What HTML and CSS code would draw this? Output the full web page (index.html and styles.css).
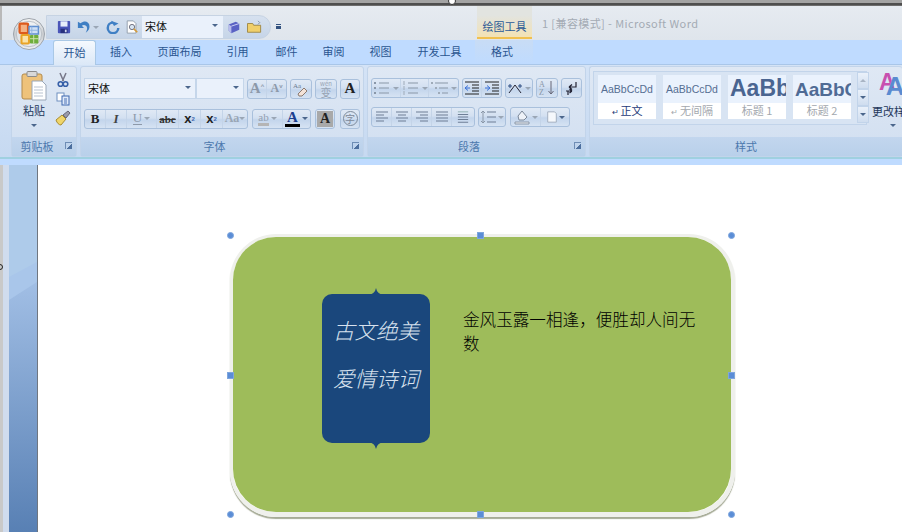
FILE: index.html
```html
<!DOCTYPE html>
<html lang="en">
<head>
    <meta charset="UTF-8">
    <meta name="viewport" content="width=device-width, initial-scale=1.0">
    <title>Microsoft Word</title>
    <link rel="stylesheet" href="styles.css">
</head>
<body>
<div class="window">
    <div class="top-edge"></div>

    <!-- Office button sits over the title bar and tabs -->
    <svg class="office-btn" viewBox="0 0 34 34">
        <defs>
            <linearGradient id="ring" x1="0" y1="0" x2="0" y2="1"><stop offset="0" stop-color="#f4f4f4"/><stop offset="0.5" stop-color="#c9ccd0"/><stop offset="1" stop-color="#eef0f2"/></linearGradient>
            <linearGradient id="face" x1="0" y1="0" x2="0" y2="1"><stop offset="0" stop-color="#f2f4f6"/><stop offset="0.5" stop-color="#dfe4e8"/><stop offset="1" stop-color="#e8eaf0"/></linearGradient>
        </defs>
        <circle cx="17" cy="17" r="16.500" fill="url(#ring)" stroke="#9aa0a8"/>
        <circle cx="17" cy="17" r="13.500" fill="url(#face)" stroke="#b9bec4"/>
        <rect x="7" y="6" width="9" height="10" rx="1" fill="#f4b183" stroke="#dd5a1c" stroke-width="2.400"/>
        <rect x="17" y="9" width="10" height="8" fill="#cfe0f6" stroke="#5f8fd0" stroke-width="1.600"/>
        <path d="M20 9v8M17 13h10" stroke="#8fb2e0"/>
        <rect x="9" y="18" width="8" height="9" rx="1" fill="#fbe3a8" stroke="#e9a427" stroke-width="2.200"/>
        <rect x="18" y="18" width="9" height="9" rx="1" fill="#6fae3c"/>
        <path d="M22 18v9M18 22h9" stroke="#d2e8b0"/>
    </svg>
    <span class="speck speck-top"></span>
    <span class="speck speck-left"></span>

    <!-- Title bar with quick access toolbar -->
    <div class="titlebar">
        <div class="qat">
            <svg class="ico-q" viewBox="0 0 16 16"><rect x="1" y="1" width="14" height="14" rx="1" fill="#4a55b8"/><rect x="4" y="1.500" width="8" height="6" fill="#e8eefb"/><rect x="4" y="10" width="8" height="5" fill="#27307e"/><rect x="9" y="11" width="2" height="3" fill="#cfd6f0"/></svg>
            <svg class="ico-q q-undo" viewBox="0 0 16 16"><path d="M1 2v7h7L5.500 6.500C8 5 11 6 11.500 9c.2 1.500-.3 3-1.500 5.500 3.500-2 5-5.500 4-9C13 1.500 8.500 0 4 3.800Z" fill="#3f7fc4"/></svg>
            <span class="caret grey"></span>
            <svg class="ico-q q-redo" viewBox="0 0 16 16"><path d="M8 3A6 6 0 1 0 14 9" fill="none" stroke="#3f7fc4" stroke-width="2.800"/><path d="M7 0v7h6Z" fill="#3f7fc4" transform="rotate(-30 8 3)"/></svg>
            <svg class="ico-q q-prev" viewBox="0 0 16 16"><path d="M2.500 1h7l3 3v11h-10Z" fill="#fdfdfd" stroke="#8d99a8"/><circle cx="8" cy="8" r="3" fill="#d8e6f2" stroke="#667"/><path d="M10 10l4 4" stroke="#d49a3a" stroke-width="2"/></svg>
            <div class="qat-combo"><span>宋体</span><span class="caret"></span></div>
            <svg class="ico-q q-box" viewBox="0 0 16 16"><path d="M2 5l8-3 4 2v7l-9 4-3-3Z" fill="#5a62c4"/><path d="M2 5l3 2v8l-3-3Z" fill="#b8bcec"/><path d="M5 7l9-3" stroke="#d8dcf8"/></svg>
            <svg class="ico-q q-folder" viewBox="0 0 18 16"><path d="M1 4h6l1 2h8v8H1Z" fill="#f0cf6a" stroke="#9a8440"/><path d="M13 1l2 2-2 2" fill="none" stroke="#7a8ba0"/></svg>
        </div>
        <span class="qat-more"></span>
        <div class="tool-tab">绘图工具</div>
        <div class="doc-title">1 [兼容模式] - Microsoft Word</div>
    </div>

    <!-- Tabs -->
    <div class="tabs">
        <div class="tab active">开始</div>
        <div class="tab w-ins">插入</div>
        <div class="tab w-layout">页面布局</div>
        <div class="tab w-ref">引用</div>
        <div class="tab w-mail">邮件</div>
        <div class="tab w-rev">审阅</div>
        <div class="tab w-view">视图</div>
        <div class="tab w-dev">开发工具</div>
        <div class="tab tab-format">格式</div>
    </div>

    <!-- Ribbon -->
    <div class="ribbon">
        <section class="group g-clip">
            <div class="group-body clip-body">
                <div class="paste">
                    <svg width="26" height="30" viewBox="0 0 26 30"><rect x="1" y="3" width="20" height="25" rx="2" fill="#eec27a" stroke="#b28a4c"/><rect x="6" y="0.500" width="10" height="5" rx="1" fill="#d8d8d8" stroke="#8b8b8b"/><path d="M11 10h10l4 4v15H11Z" fill="#fff" stroke="#9aa7b8"/><path d="M13 16h9M13 19h9M13 22h9M13 25h9" stroke="#b9c3d0"/></svg>
                    <span class="paste-label">粘贴</span>
                    <span class="caret small"></span>
                </div>
                <div class="clip-tools">
                    <svg class="ico16" viewBox="0 0 16 16"><path d="M5 1l3.500 8M11 1L7.500 9" stroke="#778" stroke-width="1.500"/><circle cx="5.500" cy="12" r="2.300" fill="none" stroke="#3760a8" stroke-width="1.600"/><circle cx="10.500" cy="12" r="2.300" fill="none" stroke="#3760a8" stroke-width="1.600"/></svg>
                    <svg class="ico16" viewBox="0 0 16 16"><rect x="2" y="2" width="7" height="8" fill="#fff" stroke="#6f8fc0"/><rect x="7" y="5" width="7" height="9" fill="#dfeafa" stroke="#3f68b0"/><path d="M9 8h3M9 10h3M9 12h3" stroke="#4a70b5"/></svg>
                    <svg class="ico16" viewBox="0 0 16 16"><path d="M1 10l6-5 4 4-5 6c-2 0-4-2-5-5Z" fill="#f0d56a" stroke="#a88c30"/><path d="M8 5l5-4 2 2-4 5Z" fill="#9a9aa8" stroke="#667"/></svg>
                </div>
            </div>
            <div class="group-label label-clip">剪贴板<span class="launcher"></span></div>
        </section>

        <section class="group g-font">
            <div class="group-body rows">
                <div class="row">
                    <div class="combo w-font"><span>宋体</span><span class="caret"></span></div>
                    <div class="combo w-size"><span class="caret"></span></div>
                    <div class="btns"><span class="btn w19 glyph-grey big">A<sup>^</sup></span><span class="btn w19 glyph-grey">A<sup>v</sup></span></div>
                    <div class="btns"><span class="btn w20"><svg class="ico16" viewBox="0 0 16 16"><text x="0" y="7" font-size="7" fill="#6a7a90">Aa</text><path d="M5 13l6-6 3 3-5 5H6Z" fill="#f4e3d8" stroke="#8b7a70"/></svg></span></div>
                    <div class="btns"><span class="btn w20 wen"><small>wén</small>变</span></div>
                    <div class="btns"><span class="btn w18 boxed-a">A</span></div>
                </div>
                <div class="row row-tight">
                    <div class="btns">
                        <span class="btn w21 bold">B</span>
                        <span class="btn w21 ital">I</span>
                        <span class="btn w30 under"><span class="u-mark">U</span><span class="caret grey"></span></span>
                        <span class="btn w22 strike">abc</span>
                        <span class="btn w22 script">x<sub>2</sub></span>
                        <span class="btn w22 script">x<sup>2</sup></span>
                        <span class="btn w24 case">Aa<span class="caret grey"></span></span>
                    </div>
                    <div class="btns">
                        <span class="btn w30 hl"><span class="hl-text">ab</span><span class="caret grey"></span></span>
                        <span class="btn w27 colour"><span class="colour-a">A</span><span class="caret"></span></span>
                    </div>
                    <div class="btns"><span class="btn w18 shade">A</span></div>
                    <div class="btns push-1"><span class="btn w18 round-btn"><span class="ring">字</span></span></div>
                </div>
            </div>
            <div class="group-label label-font">字体<span class="launcher"></span></div>
        </section>

        <section class="group g-para">
            <div class="group-body rows">
                <div class="row row-para">
                    <div class="btns">
                        <span class="btn w29"><svg class="ico18" viewBox="0 0 18 14"><path d="M6 2h10M6 7h10M6 12h10" stroke="#8a97a8" stroke-width="1.200"/><path d="M1 2h2M1 7h2M1 12h2" stroke="#8a97a8" stroke-width="2"/></svg><span class="caret grey"></span></span>
                        <span class="btn w28"><svg class="ico18" viewBox="0 0 18 14"><path d="M6 2h10M6 7h10M6 12h10" stroke="#8a97a8" stroke-width="1.200"/><path d="M2 0v4M2 5v4M2 10v4" stroke="#9fabb9"/></svg><span class="caret grey"></span></span>
                        <span class="btn w29"><svg class="ico18" viewBox="0 0 18 14"><path d="M4 2h13M8 7h9M11 12h6" stroke="#8a97a8" stroke-width="1.200"/><path d="M0 2h2M4 7h2M7 12h2" stroke="#9fabb9" stroke-width="2"/></svg><span class="caret grey"></span></span>
                    </div>
                    <div class="btns">
                        <span class="btn w19"><svg class="ico16" viewBox="0 0 16 14"><path d="M1 1h14M8 4h7M8 7h7M8 10h7M1 13h14" stroke="#222"/><path d="M6 7H1M1 7l3-2.500M1 7l3 2.500" stroke="#3a70d8" fill="none"/></svg></span>
                        <span class="btn w19"><svg class="ico16" viewBox="0 0 16 14"><path d="M1 1h14M8 4h7M8 7h7M8 10h7M1 13h14" stroke="#222"/><path d="M1 7h5M6 7L3 4.500M6 7L3 9.500" stroke="#3a70d8" fill="none"/></svg></span>
                    </div>
                    <div class="btns"><span class="btn w26"><svg class="ico16" viewBox="0 0 16 14"><path d="M2 12L8 4l6 8" fill="none" stroke="#223"/><path d="M1 5h4M3 3v4M11 5h4M13 3v4" stroke="#2a4a80"/></svg><span class="caret grey"></span></span></div>
                    <div class="btns"><span class="btn w20"><svg class="ico16" viewBox="0 0 16 16"><text x="0" y="7" font-size="8" fill="#8a97a8">A</text><text x="0" y="15" font-size="8" fill="#8a97a8">Z</text><path d="M12 1v13M9.500 11l2.500 3 2.500-3" fill="none" stroke="#667"/></svg></span></div>
                    <div class="btns"><span class="btn w19"><svg class="ico16" viewBox="0 0 16 16"><path d="M12 2v5H5M5 7l3-2.500M5 7l3 2.500M2 11h6M8 11l-2.500-2M8 11l-2.500 2M4 11v4" fill="none" stroke="#223" stroke-width="1.200"/></svg></span></div>
                </div>
                <div class="row row-para">
                    <div class="btns">
                        <span class="btn w20"><svg class="ico14" viewBox="0 0 14 12"><path d="M1 1h12M1 4h8M1 7h12M1 10h8" stroke="#6f7f96" stroke-width="1.200"/></svg></span>
                        <span class="btn w20"><svg class="ico14" viewBox="0 0 14 12"><path d="M1 1h12M3 4h8M1 7h12M3 10h8" stroke="#6f7f96" stroke-width="1.200"/></svg></span>
                        <span class="btn w20"><svg class="ico14" viewBox="0 0 14 12"><path d="M1 1h12M5 4h8M1 7h12M5 10h8" stroke="#6f7f96" stroke-width="1.200"/></svg></span>
                        <span class="btn w20"><svg class="ico14" viewBox="0 0 14 12"><path d="M1 1h12M1 4h12M1 7h12M1 10h12" stroke="#6f7f96" stroke-width="1.200"/></svg></span>
                        <span class="btn w22"><svg class="ico14" viewBox="0 0 14 14"><path d="M1 4h12M1 7h12M1 10h12M1 13h12" stroke="#6f7f96" stroke-width="1.200"/><path d="M1 1h12" stroke="#8aa"/></svg></span>
                    </div>
                    <div class="btns"><span class="btn w26"><svg class="ico16" viewBox="0 0 16 14"><path d="M7 2h9M7 7h9M7 12h9" stroke="#6f7f96" stroke-width="1.200"/><path d="M3 1v12M1 3l2-2 2 2M1 11l2 2 2-2" fill="none" stroke="#8a97a8"/></svg><span class="caret grey"></span></span></div>
                    <div class="btns push-1">
                        <span class="btn w30"><svg class="ico16" viewBox="0 0 16 16"><path d="M4 7l4-5 5 6-3 3H5Z" fill="#eef2f8" stroke="#7a8798"/><path d="M1 13h14v2H1Z" fill="#eef1f5" stroke="#8a97a8"/></svg><span class="caret grey"></span></span>
                        <span class="btn w28"><svg class="ico14" viewBox="0 0 14 14"><path d="M2 1h8l2 2v10H2Z" fill="#f5f8fc" stroke="#9aa7b8"/></svg><span class="caret"></span></span>
                    </div>
                </div>
            </div>
            <div class="group-label label-font">段落<span class="launcher"></span></div>
        </section>

        <section class="group g-styles">
            <div class="group-body styles-body">
                <div class="gallery">
                    <div class="style-item"><div class="sample s-plain">AaBbCcDd</div><div class="style-name name-on"><i class="para-mark">↵</i>正文</div></div>
                    <div class="style-item"><div class="sample s-plain">AaBbCcDd</div><div class="style-name"><i class="para-mark">↵</i>无间隔</div></div>
                    <div class="style-item"><div class="sample s-h1">AaBb</div><div class="style-name">标题 1</div></div>
                    <div class="style-item"><div class="sample s-h2">AaBbC</div><div class="style-name">标题 2</div></div>
                    <div class="gallery-scroll">
                        <span class="scroll-btn"><i class="up"></i></span>
                        <span class="scroll-btn"><i class="down"></i></span>
                        <span class="scroll-btn last"><i class="down"></i></span>
                    </div>
                </div>
                <div class="change-style">
                    <div class="change-icon"><span class="a-pink">A</span><span class="a-blue">A</span></div>
                    <span class="change-label">更改样式</span>
                    <span class="caret small"></span>
                </div>
            </div>
            <div class="group-label">样式</div>
        </section>
    </div>

    <!-- Document area -->
    <div class="workspace">
        <div class="margin-strip">
            <svg class="strip-art" viewBox="0 0 28 367" preserveAspectRatio="none">
                <defs><linearGradient id="stripFade" x1="0" y1="0" x2="0" y2="1"><stop offset="0" stop-color="#a3c0e6"/><stop offset="1" stop-color="#5880b4"/></linearGradient></defs>
                <rect y="110" width="28" height="257" fill="url(#stripFade)"/>
                <polygon points="0,0 28,0 28,117 0,135" fill="#a9c6ea"/>
                <polygon points="0,0 28,0 28,97 0,112" fill="#aecbea"/>
            </svg>
        </div>
        <div class="page">
            <div class="frame">
                <div class="frame-fill"></div>
                <div class="plaque">
                    <svg class="spike spike-top" viewBox="0 0 16 7"><path d="M0 7Q7 6 8 0Q9 6 16 7Z"/></svg>
                    <p>古文绝美</p>
                    <p>爱情诗词</p>
                    <svg class="spike spike-bottom" viewBox="0 0 16 7"><path d="M0 0Q7 1 8 7Q9 1 16 0Z"/></svg>
                </div>
                <div class="poem">金风玉露一相逢，便胜却人间无数</div>
                <span class="handle dot h-tl"></span>
                <span class="handle sq h-tc"></span>
                <span class="handle dot h-tr"></span>
                <span class="handle sq h-ml"></span>
                <span class="handle sq h-mr"></span>
                <span class="handle dot h-bl"></span>
                <span class="handle sq h-bc"></span>
                <span class="handle dot h-br"></span>
            </div>
        </div>
    </div>
</div>
</body>
</html>
```

FILE: styles.css
```css
* {
    box-sizing: border-box;
}

body {
    margin: 0;
    width: 902px;
    height: 532px;
    overflow: hidden;
    background-color: #bfdbff;
    font-family: "Noto Sans CJK SC", "Liberation Sans", sans-serif;
}

.window {
    position: relative;
    width: 902px;
    height: 532px;
    display: flex;
    flex-direction: column;
    overflow: hidden;
}

.top-edge {
    height: 6px;
    flex: none;
    background: linear-gradient(#a3a3a3 0, #a3a3a3 3px, #4e4e4e 3px, #4e4e4e 5px, #8a8a8a 6px);
}

.office-btn {
    position: absolute;
    left: 13px;
    top: 18px;
    width: 32px;
    height: 32px;
    z-index: 2;
}

.speck {
    position: absolute;
    border-radius: 50%;
}

.speck-top {
    left: 448px;
    top: -3px;
    width: 8px;
    height: 8px;
    background-color: #fff;
    border: 1px solid #333;
}

.speck-left {
    left: -3px;
    top: 264px;
    width: 6px;
    height: 6px;
    border: 1px solid #222;
    z-index: 1;
}

/* title bar */
.titlebar {
    height: 34px;
    flex: none;
    display: flex;
    align-items: flex-start;
    padding: 9px 0 0 44px;
    border-left: 2px solid #b9b9b9;
    background: linear-gradient(#e6ebf1, #dfe5ec);
}

.qat {
    width: 225px;
    height: 24px;
    display: flex;
    align-items: center;
    padding-left: 10px;
    border: 1px solid #c6d3e3;
    border-radius: 0 13px 13px 0;
    background: linear-gradient(#d6e1ef, #c6d5e8);
}

.ico-q {
    width: 14px;
    height: 14px;
    flex: none;
}

.q-undo { margin-left: 6px; }
.q-redo { margin-left: 7px; }
.q-prev { margin-left: 5px; }
.q-box { margin-left: 4px; }
.q-folder { margin-left: 5px; width: 17px; }

.qat-combo {
    width: 81px;
    height: 22px;
    margin-left: 3px;
    padding: 0 5px 3px 3px;
    display: flex;
    align-items: center;
    justify-content: space-between;
    font-size: 11px;
    color: #111;
    background-color: #eaf1fb;
}

.qat-more {
    width: 5px;
    height: 5px;
    margin: 9px 0 0 5px;
    border-top: 1px solid #33527f;
    border-bottom: 3px solid #33527f;
}

.tool-tab {
    width: 55px;
    height: 33px;
    margin: -9px 0 0 196px;
    padding-top: 13px;
    text-align: center;
    font-size: 11px;
    line-height: 15px;
    color: #2b5a96;
    background: linear-gradient(#e2e4e0 30%, #f3e2b4);
    border-bottom: 2px solid #f0c050;
}

.doc-title {
    margin: 0 0 0 10px;
    font-size: 11px;
    line-height: 16px;
    color: #a4abb4;
    letter-spacing: 0.400px;
}

/* tabs */
.tabs {
    height: 24px;
    flex: none;
    display: flex;
    padding-left: 53px;
    background-color: #bfdbff;
}

.tab {
    height: 24px;
    flex: none;
    padding-top: 3px;
    text-align: center;
    font-size: 11px;
    line-height: 16px;
    color: #2a5590;
}

.tab.active {
    width: 43px;
    height: 25px;
    border: 1px solid #a9c8e6;
    border-bottom: none;
    border-radius: 3px 3px 0 0;
    background: linear-gradient(#f5f9fe, #dbe8f7);
    position: relative;
    z-index: 1;
}

.w-ins { width: 50px; }
.w-layout { width: 67px; }
.w-ref { width: 49px; }
.w-mail { width: 49px; }
.w-rev { width: 45px; }
.w-view { width: 49px; }
.w-dev { width: 69px; }

.tab-format {
    width: 58px;
    padding-right: 4px;
    margin-left: 1px;
    background: linear-gradient(#c8dcf5, #bfdbff);
}

/* ribbon */
.ribbon {
    height: 95px;
    flex: none;
    display: flex;
    gap: 3px;
    padding: 1px 0 0 11px;
    background: linear-gradient(#d4e3f6, #c6d9f1);
    border-top: 1px solid #a9c6e8;
    border-bottom: 2px solid #9fd0e0;
}

.group {
    height: 91px;
    flex: none;
    display: flex;
    flex-direction: column;
    border: 1px solid #c2d4ea;
    border-radius: 3px;
    background: linear-gradient(#dfe8f4, #d1dff1);
}

.g-clip { width: 66px; }
.g-font { width: 284px; }
.g-para { width: 219px; }
.g-styles { width: 313px; border-right: none; }

.group-body {
    flex: 1;
    min-height: 0;
}

.group-label {
    height: 19px;
    flex: none;
    position: relative;
    text-align: center;
    font-size: 11px;
    line-height: 18px;
    color: #4c78ad;
    background: linear-gradient(#c2d6ee, #b9d0ea);
}

.label-clip {
    padding-right: 14px;
}

.label-font {
    padding-right: 15px;
}

.launcher {
    position: absolute;
    right: 4px;
    top: 5px;
    width: 7px;
    height: 7px;
    border-top: 1px solid #6e8db5;
    border-left: 1px solid #6e8db5;
    background: linear-gradient(135deg, transparent 55%, #4d6f9e 55%);
}

.clip-body {
    display: flex;
    padding: 4px 0 0 9px;
}

.paste {
    width: 26px;
    flex: none;
    display: flex;
    flex-direction: column;
    align-items: center;
}

.paste-label {
    margin-top: 2px;
    font-size: 11px;
    line-height: 15px;
    color: #23375a;
}

.clip-tools {
    display: flex;
    flex-direction: column;
    gap: 3px;
    margin: 1px 0 0 8px;
}

.ico16 { width: 16px; height: 16px; flex: none; }
.ico18 { width: 18px; height: 14px; flex: none; }
.ico14 { width: 14px; height: 12px; flex: none; }

.caret {
    width: 0;
    height: 0;
    flex: none;
    border-left: 3px solid transparent;
    border-right: 3px solid transparent;
    border-top: 3px solid #4b668c;
}

.caret.grey { border-top-color: #9aa6b5; margin-left: 2px; }
.caret.small { margin-top: 6px; }

.rows {
    display: flex;
    flex-direction: column;
    gap: 9px;
    padding: 11px 0 0 3px;
}

.row {
    display: flex;
    height: 21px;
    gap: 3px;
    align-items: center;
}

.row-tight { gap: 4px; }

.row-para {
    height: 20px;
    gap: 3px;
}

.push-1 { margin-left: 1px; }

.combo {
    height: 21px;
    flex: none;
    padding: 0 4px 2px 3px;
    display: flex;
    align-items: center;
    justify-content: space-between;
    font-size: 11px;
    color: #111;
    background-color: #eaf1fb;
    border: 1px solid #c5d6ea;
}

.w-font { width: 112px; margin-right: -3px; }
.w-size { width: 48px; justify-content: flex-end; }

.btns {
    display: flex;
    flex: none;
    height: 20px;
    border: 1px solid #a9c0dc;
    border-radius: 3px;
    background: linear-gradient(#e0e9f5 0, #d3e0f1 45%, #c3d5ec 55%, #d6e3f3 100%);
}

.btn {
    height: 18px;
    flex: none;
    display: flex;
    align-items: center;
    justify-content: center;
    border-right: 1px solid #c4d4e8;
    font-family: "Liberation Serif", serif;
    font-size: 13px;
    color: #222;
}

.btn:last-child { border-right: none; }

.w18 { width: 18px; }
.w19 { width: 19px; }
.w20 { width: 20px; }
.w21 { width: 21px; }
.w22 { width: 22px; }
.w24 { width: 24px; }
.w26 { width: 26px; }
.w27 { width: 27px; }
.w28 { width: 28px; }
.w29 { width: 29px; }
.w30 { width: 30px; }

.glyph-grey { color: #8d99a9; font-weight: bold; font-size: 12px; }
.glyph-grey.big { font-size: 15px; }
.glyph-grey sup { font-size: 6px; font-family: "Liberation Sans", sans-serif; margin-top: -6px; }

.wen {
    flex-direction: column;
    color: #97a3b3;
    font-family: "Noto Sans CJK SC", sans-serif;
    font-size: 11px;
    line-height: 10px;
}

.wen small { font-size: 6px; line-height: 6px; }

.boxed-a { font-weight: bold; font-size: 15px; }

.bold { font-weight: bold; }
.ital { font-style: italic; font-weight: bold; color: #444; }
.u-mark { color: #8d99a9; border-bottom: 1px solid #8d99a9; line-height: 12px; }
.strike { font-size: 11px; font-weight: bold; text-decoration: line-through; color: #333; }
.script { font-family: "Liberation Sans", sans-serif; font-weight: bold; }
.script sub, .script sup { font-size: 6px; line-height: 6px; color: #3f68b0; }
.case { color: #9aa6b5; font-size: 12px; font-weight: bold; }
.case .caret { margin-left: 0; }

.hl-text {
    font-size: 11px;
    line-height: 11px;
    color: #93a0b1;
    border-bottom: 3px solid #b5b5b5;
}

.colour-a {
    font-family: "Liberation Serif", serif;
    font-size: 15px;
    font-weight: bold;
    line-height: 14px;
    color: #1c3f8f;
    border-bottom: 3px solid #000;
    padding: 0 2px;
    margin-right: 2px;
}

.shade {
    font-weight: bold;
    font-size: 14px;
    background-color: #a9a9a9;
    margin: 1px;
    height: 16px;
    width: 16px;
}

.ring {
    width: 15px;
    height: 15px;
    border: 1px solid #7d8a9b;
    border-radius: 50%;
    font-family: "Noto Sans CJK SC", sans-serif;
    font-size: 10px;
    line-height: 13px;
    text-align: center;
    color: #7d8a9b;
}

/* styles gallery */
.styles-body {
    display: flex;
    padding: 4px 0 0 3px;
}

.gallery {
    width: 274px;
    height: 54px;
    flex: none;
    display: flex;
    gap: 7px;
    padding: 3px 0 0 4px;
    border: 1px solid #c2d4ea;
    background-color: #d8e4f3;
}

.style-item {
    width: 58px;
    height: 44px;
    flex: none;
    overflow: hidden;
    background-color: #fff;
}

.sample {
    height: 28px;
    overflow: hidden;
    white-space: nowrap;
    background-color: #eaf2fd;
    color: #556e92;
    font-family: "Liberation Sans", sans-serif;
}

.s-plain {
    font-size: 10.500px;
    line-height: 28px;
    text-align: center;
}

.s-h1 {
    padding-left: 2px;
    font-size: 23px;
    font-weight: bold;
    line-height: 27px;
    color: #4a6591;
}

.s-h2 {
    padding-left: 2px;
    font-size: 19px;
    font-weight: bold;
    line-height: 29px;
    color: #4f6b95;
}

.style-name {
    height: 16px;
    text-align: center;
    font-size: 11px;
    line-height: 15px;
    color: #a3a8ae;
}

.name-on { color: #1e3a78; }

.para-mark {
    font-style: normal;
    font-size: 8px;
    margin-right: 2px;
}

.gallery-scroll {
    width: 12px;
    flex: none;
    margin: -3px 0 0 -1px;
    display: flex;
    flex-direction: column;
}

.scroll-btn {
    height: 17px;
    flex: none;
    display: flex;
    align-items: center;
    justify-content: center;
    border: 1px solid #c2d4ea;
    background: linear-gradient(#eaf1fa, #cfddef);
}

.scroll-btn i {
    width: 0;
    height: 0;
    border-left: 3px solid transparent;
    border-right: 3px solid transparent;
}

.scroll-btn i.up { border-bottom: 3px solid #a8b4c4; }
.scroll-btn i.down { border-top: 3px solid #4b668c; }

.change-style {
    width: 33px;
    margin-left: 5px;
    flex: none;
    display: flex;
    flex-direction: column;
    align-items: flex-start;
    overflow: hidden;
}

.change-icon {
    height: 31px;
    display: flex;
    font-family: "Liberation Sans", sans-serif;
    font-weight: bold;
    margin-left: 7px;
}

.a-pink {
    font-size: 23px;
    line-height: 22px;
    color: #c850b0;
}

.a-blue {
    font-size: 26px;
    line-height: 28px;
    margin: 1px 0 0 -10px;
    color: #5a8bd0;
}

.change-label {
    margin-top: 2px;
    font-size: 11px;
    line-height: 14px;
    white-space: nowrap;
    color: #23375a;
}

.change-style .caret {
    margin: 6px 0 0 18px;
}

/* document */
.workspace {
    flex: 1;
    min-height: 0;
    display: flex;
    margin-top: 6px;
    background-color: #bfdbff;
}

.margin-strip {
    width: 38px;
    flex: none;
    padding-left: 6px;
    border-left: 3px solid #c9c9c9;
    border-right: 1px solid #6f7680;
    background-color: #d0dcee;
}

.strip-art {
    display: block;
    width: 28px;
    height: 100%;
}

.page {
    flex: 1;
    position: relative;
    background-color: #fff;
}

.frame {
    position: absolute;
    left: 192px;
    top: 69px;
    width: 505px;
    height: 283px;
    border-style: solid;
    border-color: #eff0ec;
    border-width: 3px 4px 5px 3px;
    border-radius: 46px;
    box-shadow: 0 2px 1px #a6ab96;
}

.frame-fill {
    height: 100%;
    border-radius: 43px;
    background-color: #9ebc5a;
}

.plaque {
    position: absolute;
    left: 89px;
    top: 57px;
    width: 108px;
    height: 149px;
    padding-top: 21px;
    border-radius: 10px;
    background-color: #1a477c;
    color: #d8e2ee;
    font-size: 21.500px;
    font-style: italic;
    font-weight: 300;
    line-height: 30px;
    text-align: center;
}

.plaque p {
    margin: 0 0 18px;
}

.spike {
    position: absolute;
    left: 46px;
    width: 16px;
    height: 7px;
    fill: #1a477c;
}

.spike-top { top: -6px; }
.spike-bottom { bottom: -6px; }

.poem {
    position: absolute;
    left: 230px;
    top: 70px;
    width: 238px;
    font-size: 16.600px;
    font-weight: 300;
    line-height: 24px;
    color: #000;
}

.handle {
    position: absolute;
    width: 7px;
    height: 7px;
    background-color: #5b8dd6;
    border: 1px solid #7ea6dd;
}

.dot { border-radius: 50%; }

.h-tl { left: -6px; top: -5px; }
.h-tc { left: 244px; top: -5px; }
.h-tr { left: 495px; top: -5px; }
.h-ml { left: -6px; top: 135px; }
.h-mr { left: 495px; top: 135px; }
.h-bl { left: -6px; top: 274px; }
.h-bc { left: 244px; top: 274px; }
.h-br { left: 495px; top: 274px; }
```
